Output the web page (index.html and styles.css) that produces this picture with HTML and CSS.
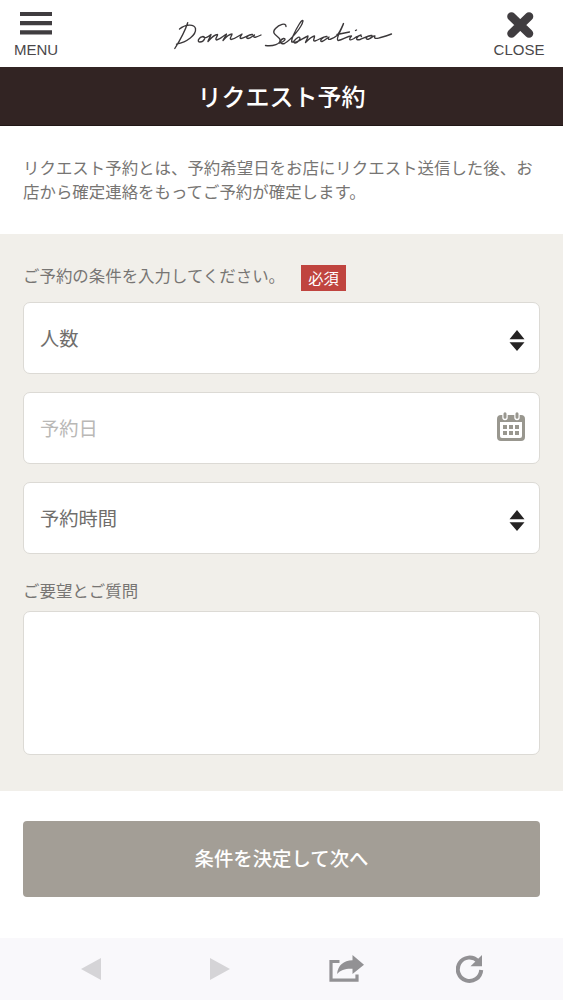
FILE: index.html
```html
<!DOCTYPE html>
<html lang="ja">
<head>
<meta charset="utf-8">
<title>リクエスト予約</title>
<link rel="stylesheet" href="styles.css">
</head>
<body>
<header class="header">
  <div class="nav-item menu">
    <svg width="32" height="24" viewBox="0 0 32 24"><path d="M0 2h32M0 11.2h32M0 20.4h32" stroke="#403d40" stroke-width="4.2"/></svg>
    <span>MENU</span>
  </div>
  <svg class="logo" width="222" height="34" viewBox="172 18 222 34" role="img" aria-label="Donna Selvatica">
    <path d="M187.7 22.7C186 28 182 37 174.8 48.500M179.500 29C185 24.500 194 23.500 195.500 28.500C196.500 35 187 42 176.500 44.200"/>
    <path d="M203 36.500C199 37 196.500 42 200 42C204 42 206.500 37 203 36.500C205 39 208 37 211 34.500C211 36 208.500 39 208 41.500C211 38 215 34.500 217.500 34.500C218 36 214.500 39 216.500 40C220 39.500 223 36 226.500 34C226 36 223.500 38.500 223 40.500C226 37 230 34 232 34C232 36 229 38.500 231 39.500C236 38.500 239 35.500 242 34C241 36 239 38 241 38.500C245 38 248 34.500 252.500 34.500C249 34 244.500 38.500 248 38.500C251 38 253 35.500 254.500 35C252 39 257 37 261 35"/>
    <path d="M286 26.500C286 22 279 24.500 275.500 28.500C270 34 279 36 280 39.500C281 44 273 46.500 265.500 45.500"/>
    <path d="M279.500 43C284 42 287 38.500 283.500 38.500C279 40 280 45 284.500 43.500C291 40 302 27 303 21C302.500 18 297 27 293 36C291 41 291 44 294 41C297 37 300 36 300 38.500C299 42 295 44 294 42.500C298 42 303 38 308 36C308 38 306 40.500 305.500 42.500C309 39 312 36 314.500 36C315 38 312 41 315 41C319 40 322 36.500 327 36.500C323 36 318.500 41.500 322 41.500C325 40.500 328 37.500 329 37C326 41.500 333 39 337 35.500C340 32 342 27 343.500 23.500C342 29 335 39 338 40.500C343 40 347 36 351.500 36C348 40 350 41 354 38.500C357 36 361 34.500 361.500 36.500M361 35C357 36 354 41 360 39.500C364 38 367 36 372 35.500C366 35 364 40.500 369 39C372 37.500 374 35 375 36C372 41 383 37 391.500 34M337 34.500L349.500 32M355.500 30.500L356.500 30"/>
  </svg>
  <div class="nav-item close">
    <svg width="28" height="28" viewBox="0 0 28 28"><path d="M5.500 5.500l17.500 17M23 5.500L5.500 22.500" stroke="#403d40" stroke-width="8.6" stroke-linecap="round"/></svg>
    <span>CLOSE</span>
  </div>
</header>
<h1 class="title">リクエスト予約</h1>
<p class="intro">リクエスト予約とは、予約希望日をお店にリクエスト送信した後、お店から確定連絡をもってご予約が確定します。</p>
<main class="form">
  <div class="label-row"><span class="label">ご予約の条件を入力してください。</span><span class="required">必須</span></div>
  <div class="field">
    <span>人数</span>
    <svg class="sort" width="16" height="22" viewBox="0 0 16 22"><path d="M8 0l7.500 9.200H.5zM.5 12.200h15L8 21z" fill="#252323"/></svg>
  </div>
  <div class="field placeholder">
    <span>予約日</span>
    <svg class="calendar" width="28" height="29" viewBox="0 0 28 29">
      <path d="M4 3h20a4 4 0 0 1 4 4v18a4 4 0 0 1-4 4H4a4 4 0 0 1-4-4V7a4 4 0 0 1 4-4zM3 10v14a2 2 0 0 0 2 2h18a2 2 0 0 0 2-2V10z" fill="#99978f" fill-rule="evenodd"/>
      <path d="M8 2.500v3M20 2.500v3" stroke="#fff" stroke-width="5.4" stroke-linecap="round"/>
      <path d="M8 1.700v3.500M20 1.700v3.500" stroke="#99978f" stroke-width="3" stroke-linecap="round"/>
      <path d="M6 13h4v4H6zM12 13h4v4h-4zM18 13h4v4h-4zM6 19h4v4H6zM12 19h4v4h-4zM18 19h4v4h-4z" fill="#99978f"/>
    </svg>
  </div>
  <div class="field">
    <span>予約時間</span>
    <svg class="sort" width="16" height="22" viewBox="0 0 16 22"><path d="M8 0l7.500 9.200H.5zM.5 12.200h15L8 21z" fill="#252323"/></svg>
  </div>
  <div class="note-label">ご要望とご質問</div>
  <div class="textarea"></div>
</main>
<div class="action"><div class="button">条件を決定して次へ</div></div>
<footer class="toolbar">
  <svg width="20" height="24" viewBox="0 0 20 24"><path d="M20 1v22L0 12z" fill="#d5d4d7"/></svg>
  <svg width="20" height="24" viewBox="0 0 20 24"><path d="M0 1v22l20-11z" fill="#d5d4d7"/></svg>
  <svg width="36" height="30" viewBox="0 0 36 30">
    <path d="M10.500 7.500h-8.500v18.700h26V20.500" fill="none" stroke="#929194" stroke-width="3.200"/>
    <path d="M23.500 1L35 10.700 23.500 20v-5.200C16 14.500 12 16 8 20C9 11 14.500 6.500 23.500 6.200z" fill="#929194"/>
  </svg>
  <svg width="28" height="30" viewBox="0 0 28 30">
    <path d="M22 7.200A11.700 11.700 0 1 0 25.200 16" fill="none" stroke="#929194" stroke-width="4"/>
    <path d="M26 1v11.200H14.500z" fill="#929194"/>
  </svg>
</footer>
</body>
</html>
```
FILE: styles.css
```css
* { box-sizing: border-box; }
body {
  margin: 0;
  width: 563px;
  height: 1000px;
  display: flex;
  flex-direction: column;
  overflow: hidden;
  background: #fff;
  color: #777573;
  font-family: "Noto Sans CJK JP", sans-serif;
  font-size: 16.45px;
}
svg { display: block; flex: none; }
.header {
  height: 67px;
  display: flex;
  justify-content: space-between;
  align-items: flex-start;
  padding: 11px 14px 0;
}
.nav-item {
  width: 50px;
  display: flex;
  flex-direction: column;
  align-items: center;
  color: #4a474a;
  font: 15px/17px "Liberation Sans", Arial, sans-serif;
}
.menu { width: 44px; gap: 5px; }
.menu svg { margin-top: 1px; }
.close { margin-right: 5px; gap: 2px; }
.close svg { margin-left: 2px; }
.logo {
  margin: 7px 0 0 13px;
  fill: none;
  stroke: #3b383a;
  stroke-width: 1.35;
  stroke-linecap: round;
  stroke-linejoin: round;
}
.title {
  margin: 0;
  height: 59px;
  background: #322423;
  border-bottom: 1px solid #211716;
  color: #fff;
  font-size: 24px;
  font-weight: 500;
  line-height: 57px;
  text-align: center;
}
.intro {
  margin: 0;
  height: 108px;
  padding: 29px 23px 0;
  line-height: 24px;
  word-break: break-all;
}
.form {
  height: 557px;
  padding: 30px 23px 0;
  background: #f1efea;
}
.label-row {
  height: 38px;
  display: flex;
  align-items: flex-start;
  gap: 16px;
  line-height: 22px;
}
.required {
  width: 45px;
  height: 26px;
  margin-top: 1px;
  background: #c0443f;
  color: #fff;
  font-size: 15.3px;
  line-height: 25px;
  text-align: center;
}
.field {
  height: 72px;
  margin-bottom: 18px;
  padding: 0 14px 0 16px;
  display: flex;
  align-items: center;
  justify-content: space-between;
  background: #fff;
  border: 1.5px solid #dcdad5;
  border-radius: 7px;
  color: #706e6c;
  font-size: 19.3px;
}
.placeholder { color: #b9b8b6; }
.sort { margin-top: 5px; }
.calendar { margin-top: -3px; }
.note-label {
  height: 39px;
  padding-top: 6px;
  line-height: 24px;
}
.textarea {
  height: 144px;
  background: #fff;
  border: 1.5px solid #dcdad5;
  border-radius: 7px;
}
.action { height: 147px; padding: 30px 23px 0; }
.button {
  height: 76px;
  border-radius: 4px;
  background: #a39e96;
  color: #fff;
  font-size: 19.4px;
  font-weight: 500;
  line-height: 74px;
  text-align: center;
}
.toolbar {
  height: 62px;
  display: grid;
  grid-template-columns: 129px 119px 127px 28px;
  align-items: center;
  padding: 0 0 0 81px;
  background: #f9f8fb;
}
```
